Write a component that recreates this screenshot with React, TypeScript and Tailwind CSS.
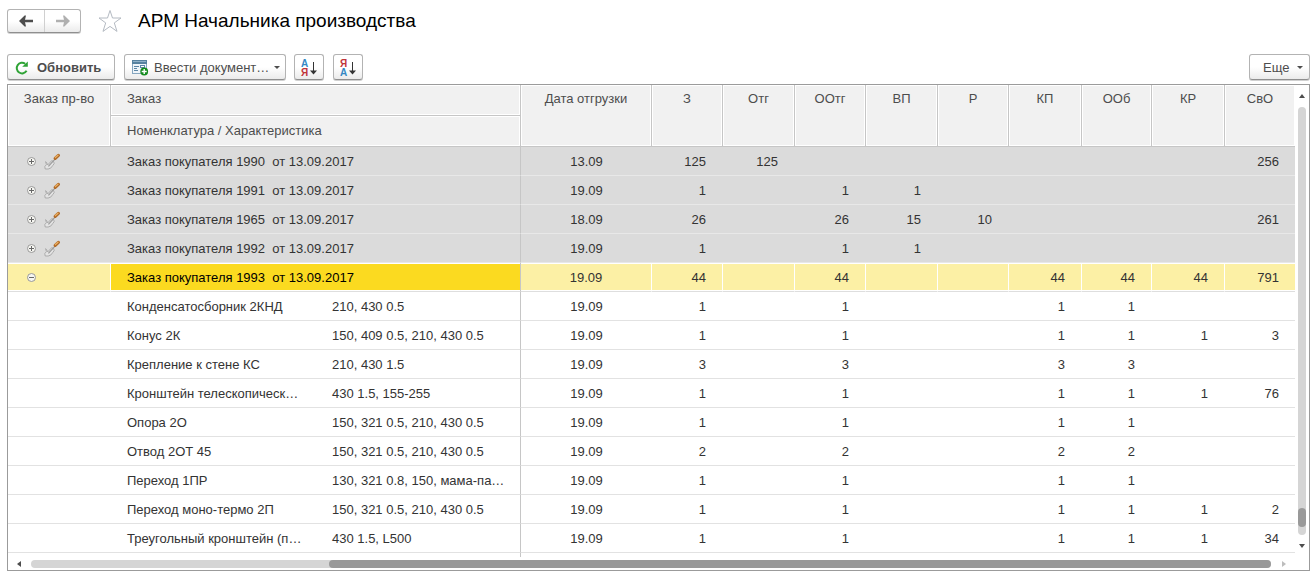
import { FC, ReactNode } from "react";

type Counts = (number | null)[];

interface Order {
  title: string;
  date: string;
  expanded?: boolean;
  values: Counts;
}

interface Item {
  name: string;
  spec: string;
  date: string;
  values: Counts;
}

const columns = ["З", "Отг", "ООтг", "ВП", "Р", "КП", "ООб", "КР", "СвО"];

const _ = null;

const orders: Order[] = [
  { title: "Заказ покупателя 1990  от 13.09.2017", date: "13.09", values: [125, 125, _, _, _, _, _, _, 256] },
  { title: "Заказ покупателя 1991  от 13.09.2017", date: "19.09", values: [1, _, 1, 1, _, _, _, _, _] },
  { title: "Заказ покупателя 1965  от 13.09.2017", date: "18.09", values: [26, _, 26, 15, 10, _, _, _, 261] },
  { title: "Заказ покупателя 1992  от 13.09.2017", date: "19.09", values: [1, _, 1, 1, _, _, _, _, _] },
  {
    title: "Заказ покупателя 1993  от 13.09.2017",
    date: "19.09",
    expanded: true,
    values: [44, _, 44, _, _, 44, 44, 44, 791],
  },
];

const items: Item[] = [
  { name: "Конденсатосборник 2КНД", spec: "210, 430 0.5", date: "19.09", values: [1, _, 1, _, _, 1, 1, _, _] },
  { name: "Конус 2К", spec: "150, 409 0.5, 210, 430 0.5", date: "19.09", values: [1, _, 1, _, _, 1, 1, 1, 3] },
  { name: "Крепление к стене КС", spec: "210, 430 1.5", date: "19.09", values: [3, _, 3, _, _, 3, 3, _, _] },
  { name: "Кронштейн телескопическ…", spec: "430 1.5, 155-255", date: "19.09", values: [1, _, 1, _, _, 1, 1, 1, 76] },
  { name: "Опора 2О", spec: "150, 321 0.5, 210, 430 0.5", date: "19.09", values: [1, _, 1, _, _, 1, 1, _, _] },
  { name: "Отвод 2ОТ 45", spec: "150, 321 0.5, 210, 430 0.5", date: "19.09", values: [2, _, 2, _, _, 2, 2, _, _] },
  { name: "Переход 1ПР", spec: "130, 321 0.8, 150, мама-па…", date: "19.09", values: [1, _, 1, _, _, 1, 1, _, _] },
  { name: "Переход моно-термо 2П", spec: "150, 321 0.5, 210, 430 0.5", date: "19.09", values: [1, _, 1, _, _, 1, 1, 1, 2] },
  { name: "Треугольный кронштейн (п…", spec: "430 1.5, L500", date: "19.09", values: [1, _, 1, _, _, 1, 1, 1, 34] },
];

const buttonLook =
  "flex items-center rounded-[3px] border border-[#b3b3b3] border-b-[#8f8f8f] bg-linear-to-b from-white from-50% to-[#ebebeb] shadow-[0_1px_0_#d0d0d0]";

const Button: FC<{ className: string; label?: string; children: ReactNode }> = ({ className, label, children }) => (
  <button type="button" aria-label={label} className={`${buttonLook} h-[26px] pt-px text-[#4d4d4d] ${className}`}>
    {children}
  </button>
);

const ArrowIcon: FC<{ className: string }> = ({ className }) => (
  <svg width="14" height="12" viewBox="0 0 14 12" className={className}>
    <path d="M0 6 5.6 0.6H7L6 4.8H14V7.2H6L7 11.4H5.6Z" fill="currentColor" />
  </svg>
);

const CaretIcon: FC = () => (
  <svg width="6" height="3" viewBox="0 0 6 3">
    <path d="M0 0H6L3 3Z" fill="#4d4d4d" />
  </svg>
);

const StarIcon: FC = () => (
  <svg width="24" height="24" viewBox="0 0 24 24" fill="none" stroke="#b4bac2">
    <path d="M12 1.5 14.5 9H23L16.3 13.9 19 22.4 12 17.4 5 22.4 7.7 13.9 1 9H9.5Z" />
  </svg>
);

const RefreshIcon: FC = () => (
  <svg width="14" height="14" viewBox="0 0 14 14" fill="none">
    <path d="M11.6 9.8A5.3 5.3 0 1 1 10.2 2.8" stroke="#2fa336" strokeWidth="2" />
    <path d="M7.2 5.8H12.8V0.4Z" fill="#2fa336" />
  </svg>
);

const DocumentIcon: FC = () => (
  <svg width="17" height="16" viewBox="0 0 17 16">
    <rect x="0.5" y="0.5" width="14" height="13" fill="#eef4f9" stroke="#86a6c0" />
    <rect width="15" height="4" fill="#56819f" />
    <path d="M1 1.5H14" stroke="#8fb0c8" />
    <path d="M2 6.5H7M2 8.5H5M2 10.5H6" stroke="#5c86a6" />
    <rect x="8.5" y="5.5" width="4" height="2" fill="#fff" stroke="#5c86a6" />
    <circle cx="12.2" cy="11.5" r="3.9" fill="#128a1c" />
    <path d="M12.2 9V14M9.7 11.5H14.7" stroke="#fff" strokeWidth="1.4" />
  </svg>
);

const SortIcon: FC<{ descending?: boolean }> = ({ descending }) => (
  <span className="flex items-center gap-[2px]">
    <span className="flex flex-col text-[10px] leading-[9px] font-bold">
      {descending ? (
        <>
          <span className="text-[#c0343a]">Я</span>
          <span className="text-[#3388c4]">А</span>
        </>
      ) : (
        <>
          <span className="text-[#3388c4]">А</span>
          <span className="text-[#c0343a]">Я</span>
        </>
      )}
    </span>
    <svg width="7" height="14" viewBox="0 0 7 14">
      <path d="M3.5 1V12" stroke="#333" />
      <path d="M0 9.6H7L3.5 13.4Z" fill="#333" />
    </svg>
  </span>
);

const ToggleIcon: FC<{ expanded?: boolean }> = ({ expanded }) => (
  <svg width="9" height="9" viewBox="0 0 9 9" fill="none">
    <circle cx="4.5" cy="4.5" r="4" fill="#f6f6f2" stroke="#999" />
    <path d={expanded ? "M2 4.5H7" : "M2 4.5H7M4.5 2V7"} stroke="#666" />
  </svg>
);

const ShovelIcon: FC = () => (
  <svg width="17" height="17" viewBox="0 0 17 17" fill="none">
    <path
      d="M1.6 8.6Q3.4 10.4 3.6 12L8 7.4 9.8 9.2Q11 10.6 8.8 12.4 7.4 15.6 4.2 16H1.2L0.8 13.6 2.4 11.6Z"
      fill="#e4e4e4"
      stroke="#a6a6a6"
      strokeWidth="0.9"
      strokeLinejoin="round"
    />
    <path d="M4.4 13.4 11 6.2" stroke="#9a9a9a" strokeWidth="1.2" />
    <path d="M11.2 5.4 14.4 2.4" stroke="#b06a28" strokeWidth="3.2" strokeLinecap="round" />
    <path d="M11.4 4.6 14 2.2" stroke="#eab064" strokeWidth="1.3" strokeLinecap="round" />
  </svg>
);

const ScrollArrow: FC<{ d: string; label: string; muted?: boolean }> = ({ d, label, muted }) => (
  <button type="button" aria-label={label} className={muted ? "text-[#bdbdbd]" : "text-[#4d4d4d]"}>
    <svg width="6" height="6" viewBox="0 0 6 6">
      <path d={d} fill="currentColor" />
    </svg>
  </button>
);

const headCell = "border-b border-[#c6c6c6] bg-[#f1f1f1] font-normal shadow-[inset_0_0_0_1px_#fff]";
const tallHeadCell = `${headCell} pt-[6px] align-top`;

const OrderRow: FC<{ order: Order }> = ({ order }) => {
  const active = order.expanded;
  const cell = active
    ? "border-b border-b-[#dedede] pt-px shadow-[inset_0_1px_0_#fff,inset_0_-1px_0_#fff]"
    : "border-b border-b-[#e8e8e8] pt-px";
  const divider = active ? "border-r border-r-white" : "";
  const numberPadding = active ? "pr-4" : "pr-[17px]";

  return (
    <tr className={`h-[29px] ${active ? "bg-[#fcf0a5]" : "bg-[#dbdbdb]"}`}>
      <td className={`${cell} ${divider} pl-[19px]`}>
        <div className="flex items-center gap-2">
          <button type="button" aria-label={active ? "Свернуть" : "Развернуть"}>
            <ToggleIcon expanded={active} />
          </button>
          {!active && <ShovelIcon />}
        </div>
      </td>
      <td
        colSpan={2}
        className={`${cell} border-r border-r-[#c6c6c6] pl-4 whitespace-pre ${active ? "bg-[#fbda20] text-black" : ""}`}
      >
        {order.title}
      </td>
      <td className={`${cell} ${divider} text-center`}>{order.date}</td>
      {order.values.map((value, index) => (
        <td
          key={index}
          className={`${cell} text-right ${index < columns.length - 1 ? `${divider} ${numberPadding}` : "pr-4"}`}
        >
          {value}
        </td>
      ))}
    </tr>
  );
};

const ItemRow: FC<{ item: Item }> = ({ item }) => {
  const cell = "border-b border-b-[#e2e2e2] pt-px";

  return (
    <tr className="h-[29px]">
      <td className={cell} />
      <td className={`${cell} truncate pl-4`}>{item.name}</td>
      <td className={`${cell} truncate border-r border-r-[#c6c6c6] pl-4`}>{item.spec}</td>
      <td className={`${cell} text-center`}>{item.date}</td>
      {item.values.map((value, index) => (
        <td key={index} className={`${cell} text-right ${index < columns.length - 1 ? "pr-[17px]" : "pr-4"}`}>
          {value}
        </td>
      ))}
    </tr>
  );
};

const App: FC = () => {
  return (
    <div className="bg-white pt-2 pr-[5px] pb-1 pl-[7px] font-['Liberation_Sans',Arial,sans-serif] text-[13px] leading-4 text-[#333]">
      <header className="flex h-[25px] items-center">
        <div className={`${buttonLook} h-6`}>
          <button type="button" aria-label="Назад" className="flex h-full w-9 items-center justify-center">
            <ArrowIcon className="text-[#4d4d4d]" />
          </button>
          <button
            type="button"
            aria-label="Вперед"
            className="flex h-full w-9 items-center justify-center border-l border-[#d0d0d0]"
          >
            <ArrowIcon className="rotate-180 text-[#b0b0b0]" />
          </button>
        </div>
        <button type="button" aria-label="В избранное" className="ml-[17px]">
          <StarIcon />
        </button>
        <h1 className="ml-4 pt-px text-[19px] leading-6 text-black">АРМ Начальника производства</h1>
      </header>

      <div className="mt-[21px] flex items-center">
        <Button className="w-[108px] gap-2 pl-[7px] font-bold">
          <RefreshIcon />
          Обновить
        </Button>
        <Button className="ml-[9px] w-[162px] pl-[7px]">
          <DocumentIcon />
          <span className="ml-[5px]">Ввести документ…</span>
          <span className="mr-[5px] ml-auto">
            <CaretIcon />
          </span>
        </Button>
        <Button className="ml-2 w-[30px] justify-center" label="Сортировать по возрастанию">
          <SortIcon />
        </Button>
        <Button className="ml-[9px] w-[30px] justify-center" label="Сортировать по убыванию">
          <SortIcon descending />
        </Button>
        <Button className="ml-auto w-[61px] justify-between pr-[6px] pl-[13px]">
          Еще
          <CaretIcon />
        </Button>
      </div>

      <div className="mt-1 border border-[#9b9b9b]">
        <div className="flex">
          <div className="min-w-0 flex-1">
            <table className="w-full table-fixed border-separate border-spacing-0">
              <colgroup>
                <col className="w-[103px]" />
                <col />
                <col />
                <col className="w-[131px]" />
                <col className="w-[71px]" />
                <col className="w-[72px]" />
                <col className="w-[71px]" />
                <col className="w-[72px]" />
                <col className="w-[71px]" />
                <col className="w-[73px]" />
                <col className="w-[70px]" />
                <col className="w-[73px]" />
                <col className="w-[70px]" />
              </colgroup>
              <thead className="text-[#4d4d4d]">
                <tr className="h-[31px]">
                  <th rowSpan={2} className={`${tallHeadCell} border-r`}>
                    Заказ пр-во
                  </th>
                  <th colSpan={2} className={`${tallHeadCell} border-r pl-4 text-left`}>
                    Заказ
                  </th>
                  <th rowSpan={2} className={`${tallHeadCell} border-r`}>
                    Дата отгрузки
                  </th>
                  {columns.map((column, index) => (
                    <th
                      key={column}
                      rowSpan={2}
                      className={`${tallHeadCell} ${index < columns.length - 1 ? "border-r" : ""}`}
                    >
                      {column}
                    </th>
                  ))}
                </tr>
                <tr className="h-[31px]">
                  <th colSpan={2} className={`${headCell} border-r pl-4 text-left`}>
                    Номенклатура / Характеристика
                  </th>
                </tr>
              </thead>
              <tbody>
                {orders.map((order) => (
                  <OrderRow key={order.title} order={order} />
                ))}
                {items.map((item) => (
                  <ItemRow key={item.name} item={item} />
                ))}
                <tr className="h-1">
                  <td />
                  <td colSpan={2} className="border-r border-[#c6c6c6]" />
                  <td colSpan={10} />
                </tr>
              </tbody>
            </table>
          </div>
          <div className="flex w-[14px] flex-col items-center justify-between pt-2 pb-2">
            <ScrollArrow label="Вверх" d="M0 5H6L3 1Z" />
            <div className="mt-2 mb-2 flex w-2 flex-1 flex-col justify-end rounded-full bg-[#d5d5d5] pb-2">
              <div className="h-[19px] rounded-full bg-[#999]" />
            </div>
            <ScrollArrow label="Вниз" d="M0 1H6L3 5Z" />
          </div>
        </div>
        <div className="flex h-[13px] items-center pr-[22px] pl-2">
          <ScrollArrow label="Влево" d="M5 0V6L1 3Z" />
          <div className="mr-[10px] ml-[9px] flex h-2 flex-1 justify-end rounded-full bg-[#d5d5d5]">
            <div className="h-2 w-[76%] rounded-full bg-[#999]" />
          </div>
          <ScrollArrow label="Вправо" d="M1 0V6L5 3Z" muted />
        </div>
      </div>
    </div>
  );
};

export default App;
